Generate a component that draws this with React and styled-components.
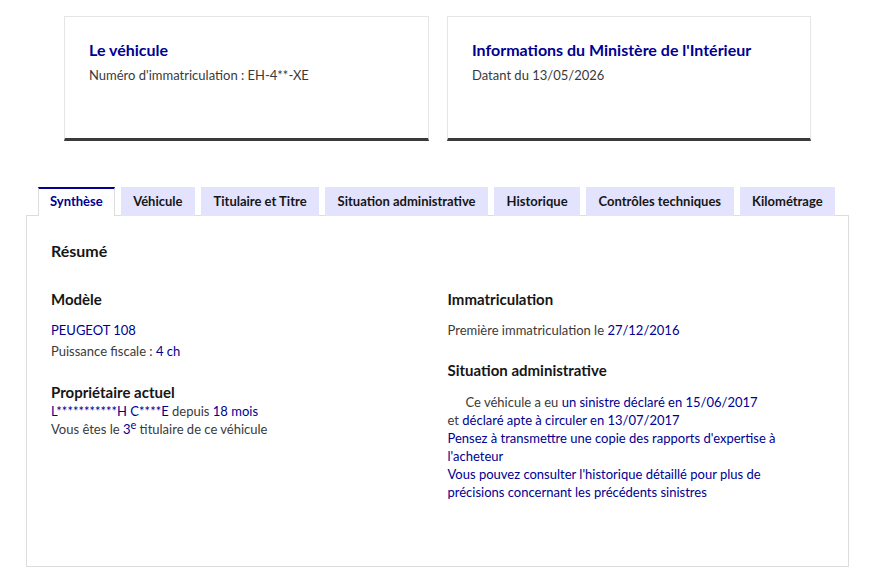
import React from 'react';
import styled, { createGlobalStyle } from 'styled-components';

const GlobalStyle = createGlobalStyle`
  body {
    margin: 0;
    background: #fff;
    font-family: Lato, "Open Sans", sans-serif;
    color: #3a3a3a;
  }
`;

const Page = styled.div`
  width: 875px;
  padding-top: 16px;
`;

const Cards = styled.div`
  display: grid;
  grid-template-columns: 365px 364px;
  gap: 18px;
  padding: 0 64px;
`;

const Card = styled.div`
  box-sizing: border-box;
  border: 1px solid #e5e5e5;
  border-bottom: 3px solid #3a3a3a;
  height: 125px;
  padding: 22px 24px;
`;

const CardTitle = styled.div`
  color: #000091;
  font-size: 16px;
  font-weight: 700;
  line-height: 22px;
`;

const CardText = styled.div`
  font-size: 13px;
  line-height: 20px;
  margin-top: 4px;
  color: #3a3a3a;
`;

const TabsArea = styled.div`
  margin: 46px 26px 0;
`;

const TabList = styled.div`
  display: flex;
  gap: 6px;
  padding-left: 12px;
`;

const Tab = styled.div`
  height: 29px;
  box-sizing: border-box;
  padding: 0 ${p => (p.active ? 11 : 11.5)}px 3px;
  display: flex;
  align-items: center;
  font-size: 13px;
  font-weight: 700;
  color: ${p => (p.active ? '#000091' : '#161616')};
  background: ${p => (p.active ? '#fff' : '#e3e3fd')};
  border-top: 2px solid ${p => (p.active ? '#000091' : 'transparent')};
  border-left: 1px solid ${p => (p.active ? '#ddd' : 'transparent')};
  border-right: 1px solid ${p => (p.active ? '#ddd' : 'transparent')};
  margin-bottom: -1px;
  position: relative;
  z-index: 1;
`;

const Panel = styled.div`
  border: 1px solid #ddd;
  height: 352px;
  box-sizing: border-box;
  padding: 24px 24px;
`;

const Title = styled.div`
  font-size: 16px;
  font-weight: 700;
  color: #161616;
  line-height: 22px;
`;

const Columns = styled.div`
  display: grid;
  grid-template-columns: 1fr 1fr;
  gap: 20px;
  margin-top: 27px;
`;

const Column = styled.div`
  display: flex;
  flex-direction: column;
`;

const SectionTitle = styled.div`
  font-size: 15px;
  font-weight: 700;
  color: #161616;
  line-height: 20px;
  margin-top: ${p => p.top || 0}px;
  margin-bottom: ${p => p.bottom || 0}px;
`;

const Line = styled.div`
  font-size: 13px;
  line-height: ${p => p.lh || 18}px;
  color: #3a3a3a;
  padding-left: ${p => p.indent || 0}px;
`;

const Value = styled.span`
  color: #000091;
`;

const Sup = styled.sup`
  font-size: 11px;
  line-height: 0;
`;

const Blue = styled.div`
  font-size: 13px;
  line-height: ${p => p.lh || 18}px;
  color: #000091;
`;

const tabs = [
  'Synthèse',
  'Véhicule',
  'Titulaire et Titre',
  'Situation administrative',
  'Historique',
  'Contrôles techniques',
  'Kilométrage',
];

export default function App() {
  return (
    <Page>
      <GlobalStyle />
      <Cards>
        <Card>
          <CardTitle>Le véhicule</CardTitle>
          <CardText>Numéro d'immatriculation : EH-4**-XE</CardText>
        </Card>
        <Card>
          <CardTitle>Informations du Ministère de l'Intérieur</CardTitle>
          <CardText>Datant du 13/05/2026</CardText>
        </Card>
      </Cards>
      <TabsArea>
        <TabList>
          {tabs.map((t, i) => (
            <Tab key={t} active={i === 0}>{t}</Tab>
          ))}
        </TabList>
        <Panel>
          <Title>Résumé</Title>
          <Columns>
            <Column>
              <SectionTitle bottom={11}>Modèle</SectionTitle>
              <Blue lh={21}>PEUGEOT 108</Blue>
              <Line lh={21}>Puissance fiscale : <Value>4 ch</Value></Line>
              <SectionTitle top={20}>Propriétaire actuel</SectionTitle>
              <Line>
                <Value>L***********H C****E</Value> depuis <Value>18 mois</Value>
              </Line>
              <Line>
                Vous êtes le <Value>3<Sup>e</Sup></Value> titulaire de ce véhicule
              </Line>
            </Column>
            <Column>
              <SectionTitle bottom={11}>Immatriculation</SectionTitle>
              <Line lh={21}>Première immatriculation le <Value>27/12/2016</Value></Line>
              <SectionTitle top={19} bottom={13}>Situation administrative</SectionTitle>
              <Line indent={18}>
                Ce véhicule a eu <Value>un sinistre déclaré en 15/06/2017</Value>
              </Line>
              <Line>
                et <Value>déclaré apte à circuler en 13/07/2017</Value>
              </Line>
              <Blue>Pensez à transmettre une copie des rapports d'expertise à<br />l'acheteur</Blue>
              <Blue>Vous pouvez consulter l'historique détaillé pour plus de<br />précisions concernant les précédents sinistres</Blue>
            </Column>
          </Columns>
        </Panel>
      </TabsArea>
    </Page>
  );
}
